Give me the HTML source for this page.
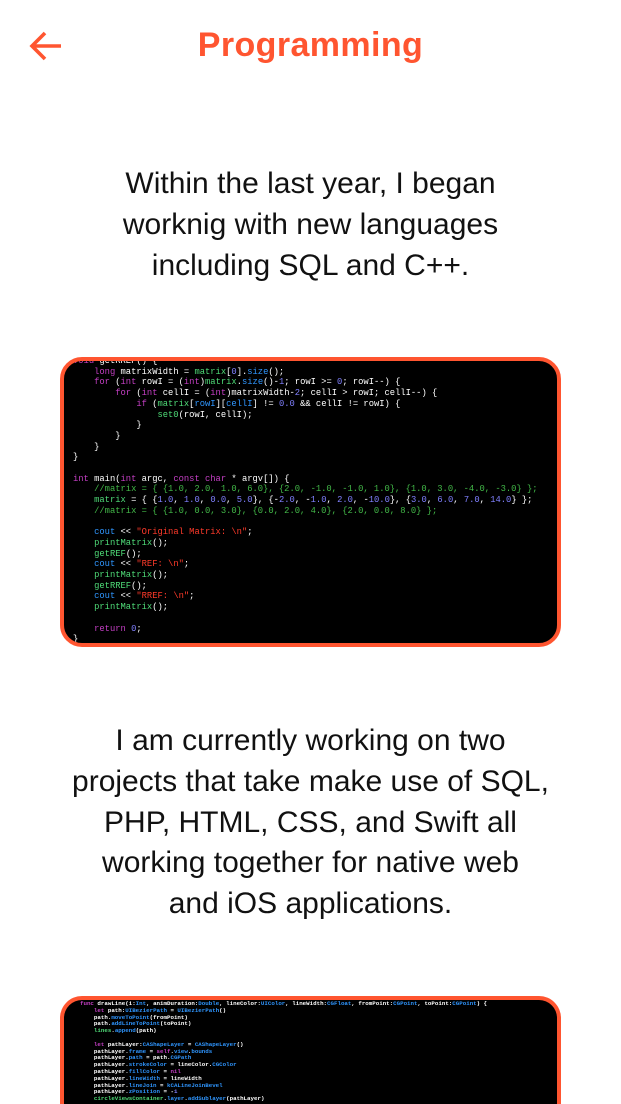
<!DOCTYPE html>
<html><head><meta charset="utf-8"><style>
html,body{margin:0;width:621px;height:1104px;overflow:hidden}
body{background:#fff;position:relative;font-family:"Liberation Sans",sans-serif}
#wrap{position:absolute;left:0;top:0;width:621px;height:1104px;overflow:hidden}
.title{position:absolute;left:0;width:621px;top:26px;text-align:center;color:#ff5530;font-weight:bold;font-size:34px;letter-spacing:0.4px}
.txt{position:absolute;left:0;width:621px;text-align:center;color:#111;font-size:30px;line-height:40.8px}
.box{position:absolute;left:60px;width:493px;background:#000;border:4px solid #ff5530;border-radius:22px;overflow:hidden}
pre{margin:0;font-family:"Liberation Mono",monospace;color:#fff;white-space:pre}
.k{color:#c43fc4}.g{color:#4fdc78}.b{color:#2f96ff}.c{color:#42b848}.s{color:#ff3a2a}.n{color:#8080ff}
</style></head><body><div id="wrap">
<svg style="position:absolute;left:28px;top:30px" width="36" height="32" viewBox="0 0 36 32"><path d="M33 16H4M17 3L4 16l13 13" fill="none" stroke="#ff5530" stroke-width="3.6"/></svg>
<div class="title">Programming</div>
<div class="txt" style="top:164px">Within the last year, I began<br>worknig with new languages<br>including SQL and C++.</div>
<div class="box" style="top:357px;height:282px">
<pre style="font-size:8.8px;line-height:10.7px;margin-top:-5px;margin-left:9px"><span class="k">void</span> getRREF() {
    <span class="k">long</span> matrixWidth = <span class="g">matrix</span>[<span class="n">0</span>].<span class="b">size</span>();
    <span class="k">for</span> (<span class="k">int</span> rowI = (<span class="k">int</span>)<span class="g">matrix</span>.<span class="b">size</span>()-<span class="n">1</span>; rowI &gt;= <span class="n">0</span>; rowI--) {
        <span class="k">for</span> (<span class="k">int</span> cellI = (<span class="k">int</span>)matrixWidth-<span class="n">2</span>; cellI &gt; rowI; cellI--) {
            <span class="k">if</span> (<span class="g">matrix</span>[<span class="b">rowI</span>][<span class="b">cellI</span>] != <span class="n">0.0</span> &amp;&amp; cellI != rowI) {
                <span class="g">set0</span>(rowI, cellI);
            }
        }
    }
}

<span class="k">int</span> main(<span class="k">int</span> argc, <span class="k">const char</span> * argv[]) {
    <span class="c">//matrix = { {1.0, 2.0, 1.0, 6.0}, {2.0, -1.0, -1.0, 1.0}, {1.0, 3.0, -4.0, -3.0} };</span>
    <span class="g">matrix</span> = { {<span class="n">1.0</span>, <span class="n">1.0</span>, <span class="n">0.0</span>, <span class="n">5.0</span>}, {-<span class="n">2.0</span>, -<span class="n">1.0</span>, <span class="n">2.0</span>, -<span class="n">10.0</span>}, {<span class="n">3.0</span>, <span class="n">6.0</span>, <span class="n">7.0</span>, <span class="n">14.0</span>} };
    <span class="c">//matrix = { {1.0, 0.0, 3.0}, {0.0, 2.0, 4.0}, {2.0, 0.0, 8.0} };</span>

    <span class="b">cout</span> &lt;&lt; <span class="s">"Original Matrix: \n"</span>;
    <span class="g">printMatrix</span>();
    <span class="g">getREF</span>();
    <span class="b">cout</span> &lt;&lt; <span class="s">"REF: \n"</span>;
    <span class="g">printMatrix</span>();
    <span class="g">getRREF</span>();
    <span class="b">cout</span> &lt;&lt; <span class="s">"RREF: \n"</span>;
    <span class="g">printMatrix</span>();

    <span class="k">return</span> <span class="n">0</span>;
}</pre></div>
<div class="txt" style="top:721px">I am currently working on two<br>projects that take make use of SQL,<br>PHP, HTML, CSS, and Swift all<br>working together for native web<br>and iOS applications.</div>
<div class="box" style="top:996px;height:104px;border-bottom:none;border-radius:22px 22px 0 0">
<pre style="font-size:5.8px;line-height:6.8px;margin-top:1px;margin-left:16px;font-weight:bold"><span class="k">func</span> drawLine(i:<span class="b">Int</span>, animDuration:<span class="b">Double</span>, lineColor:<span class="b">UIColor</span>, lineWidth:<span class="b">CGFloat</span>, fromPoint:<span class="b">CGPoint</span>, toPoint:<span class="b">CGPoint</span>) {
    <span class="k">let</span> path:<span class="b">UIBezierPath</span> = <span class="b">UIBezierPath</span>()
    path.<span class="b">moveToPoint</span>(fromPoint)
    path.<span class="b">addLineToPoint</span>(toPoint)
    <span class="g">lines</span>.<span class="b">append</span>(path)

    <span class="k">let</span> pathLayer:<span class="b">CAShapeLayer</span> = <span class="b">CAShapeLayer</span>()
    pathLayer.<span class="b">frame</span> = <span class="k">self</span>.<span class="b">view</span>.<span class="b">bounds</span>
    pathLayer.<span class="b">path</span> = path.<span class="b">CGPath</span>
    pathLayer.<span class="b">strokeColor</span> = lineColor.<span class="b">CGColor</span>
    pathLayer.<span class="b">fillColor</span> = <span class="k">nil</span>
    pathLayer.<span class="b">lineWidth</span> = lineWidth
    pathLayer.<span class="b">lineJoin</span> = <span class="b">kCALineJoinBevel</span>
    pathLayer.<span class="b">zPosition</span> = -<span class="n">1</span>
    <span class="g">circleViewsContainer</span>.<span class="b">layer</span>.<span class="b">addSublayer</span>(pathLayer)</pre></div>
</div></body></html>
